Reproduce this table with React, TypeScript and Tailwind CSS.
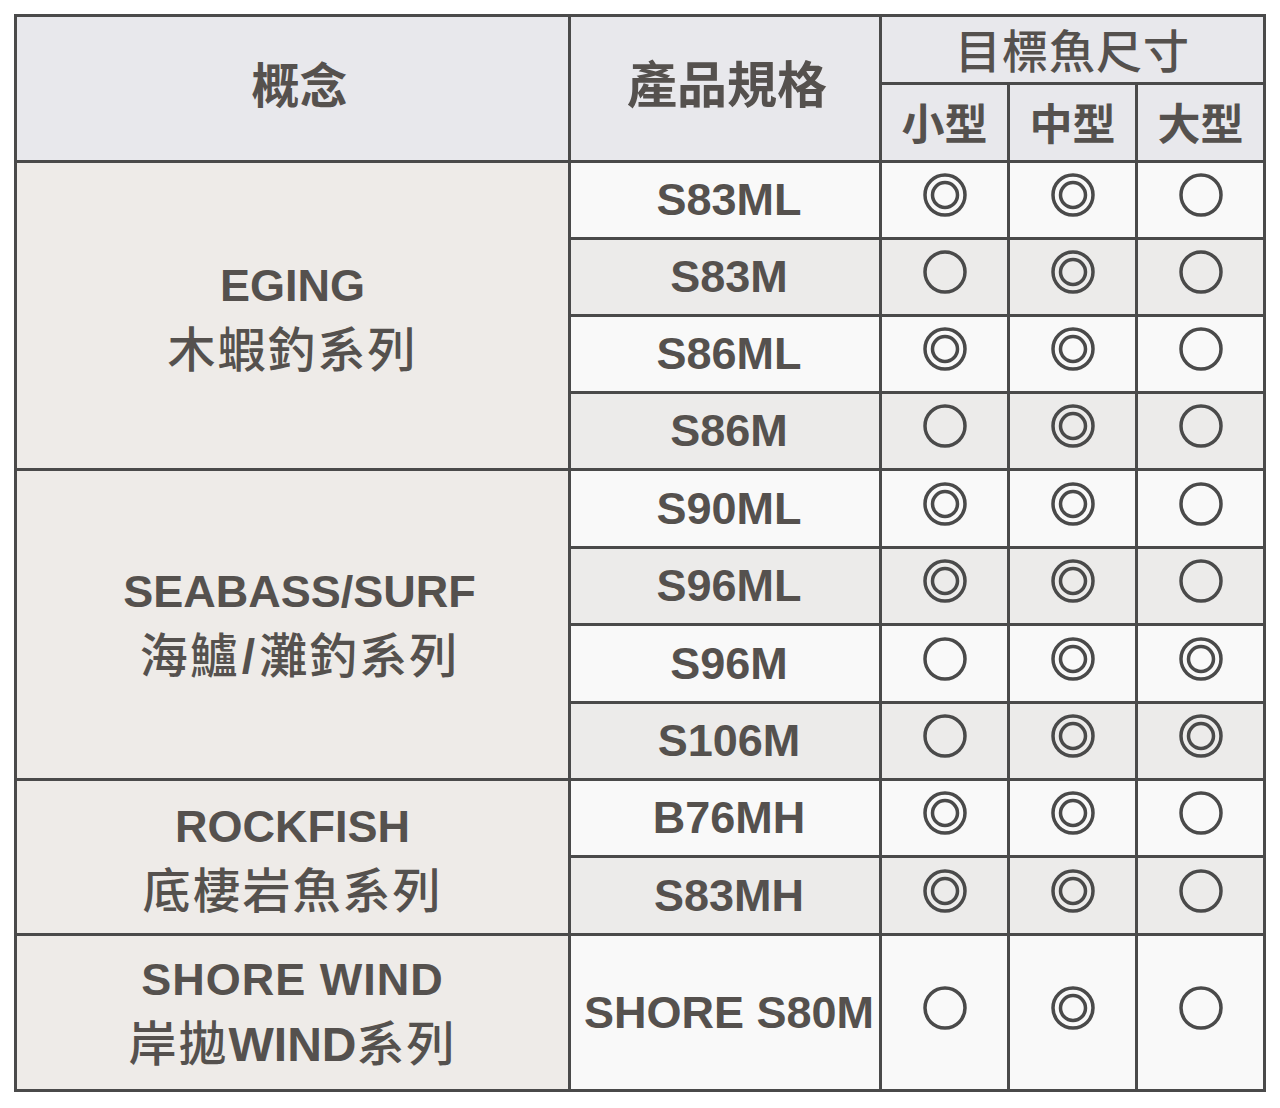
import React from 'react';

type Mark = 'double' | 'single';

const rows: { model: string; marks: Mark[] }[] = [
  { model: 'S83ML', marks: ['double', 'double', 'single'] },
  { model: 'S83M', marks: ['single', 'double', 'single'] },
  { model: 'S86ML', marks: ['double', 'double', 'single'] },
  { model: 'S86M', marks: ['single', 'double', 'single'] },
  { model: 'S90ML', marks: ['double', 'double', 'single'] },
  { model: 'S96ML', marks: ['double', 'double', 'single'] },
  { model: 'S96M', marks: ['single', 'double', 'double'] },
  { model: 'S106M', marks: ['single', 'double', 'double'] },
  { model: 'B76MH', marks: ['double', 'double', 'single'] },
  { model: 'S83MH', marks: ['double', 'double', 'single'] },
  { model: 'SHORE S80M', marks: ['single', 'double', 'single'] },
];

const latin = "font-['Liberation_Sans',Arial,sans-serif] font-bold";
const cjk = "font-['Noto_Sans_CJK_TC','Noto_Sans',sans-serif]";

// group label cells: start row index + span
const groups: Record<number, { en: React.ReactNode; zh: React.ReactNode; span: string }> = {
  0: { en: 'EGING', zh: '木蝦釣系列', span: 'row-span-4' },
  4: {
    en: <span className="pl-[14px]">SEABASS/SURF</span>,
    zh: (
      <span className="pl-[14px]">
        海鱸<span className={`${latin} px-[2px]`}>/</span>灘釣系列
      </span>
    ),
    span: 'row-span-4',
  },
  8: { en: 'ROCKFISH', zh: '底棲岩魚系列', span: 'row-span-2' },
  10: {
    en: <span className="tracking-[1px]">SHORE WIND</span>,
    zh: (
      <>
        岸拋<span className={`${latin} tracking-[0px]`}>WIND</span>系列
      </>
    ),
    span: 'row-span-1',
  },
};

const Circle = ({ type }: { type: Mark }) => (
  <svg width="44" height="44" viewBox="0 0 44 44">
    <circle cx="22" cy="22" r="20" fill="none" stroke="#4a4a4a" strokeWidth="3.5" />
    {type === 'double' && (
      <circle cx="22" cy="22" r="12.5" fill="none" stroke="#4a4a4a" strokeWidth="3.5" />
    )}
  </svg>
);

export default function App() {
  return (
    <div className="w-[1280px] h-[1108px] bg-white pt-[14px] pl-[14px]">
      <div className="grid w-[1252px] grid-cols-[551px_308px_125px_125px_125px] grid-rows-[65px_75px_74px_74px_74px_74px_75px_74px_75px_74px_74px_75px_153px] gap-[3px] bg-[#4a4a4a] p-[3px] text-[#55514e]">
        {/* header */}
        <div className={`row-span-2 flex items-center justify-center bg-[#e8e8ec] pl-[14px] pb-[14px] text-[48px] font-bold ${cjk}`}>
          概念
        </div>
        <div className={`row-span-2 flex items-center justify-center bg-[#e8e8ec] pl-[4px] pb-[14px] text-[50px] font-bold ${cjk}`}>
          產品規格
        </div>
        <div className={`col-span-3 flex items-center justify-center bg-[#e8e8ec] pb-[3px] text-[46px] font-medium tracking-[1px] ${cjk}`}>
          目標魚尺寸
        </div>
        {['小型', '中型', '大型'].map((s) => (
          <div key={s} className={`flex items-center justify-center bg-[#e8e8ec] pb-[3px] text-[43px] font-bold ${cjk}`}>
            {s}
          </div>
        ))}

        {/* body */}
        {rows.map((r, i) => {
          const g = groups[i];
          const bg = i % 2 === 0 ? 'bg-[#f9f9f9]' : 'bg-[#ecebea]';
          return (
            <React.Fragment key={r.model}>
              {g && (
                <div className={`${g.span} col-start-1 flex flex-col items-center justify-center bg-[#eeebe8] leading-[60px]`}>
                  <span className={`${latin} text-[45px]`}>{g.en}</span>
                  <span className={`${cjk} text-[48px] font-medium tracking-[2px]`}>{g.zh}</span>
                </div>
              )}
              <div className={`col-start-2 flex items-center justify-center ${bg} pl-[8px] ${latin} text-[45px]`}>
                {r.model}
              </div>
              {r.marks.map((m, j) => (
                <div key={j} className={`flex items-center justify-center pb-[10px] ${bg}`}>
                  <Circle type={m} />
                </div>
              ))}
            </React.Fragment>
          );
        })}
      </div>
    </div>
  );
}
